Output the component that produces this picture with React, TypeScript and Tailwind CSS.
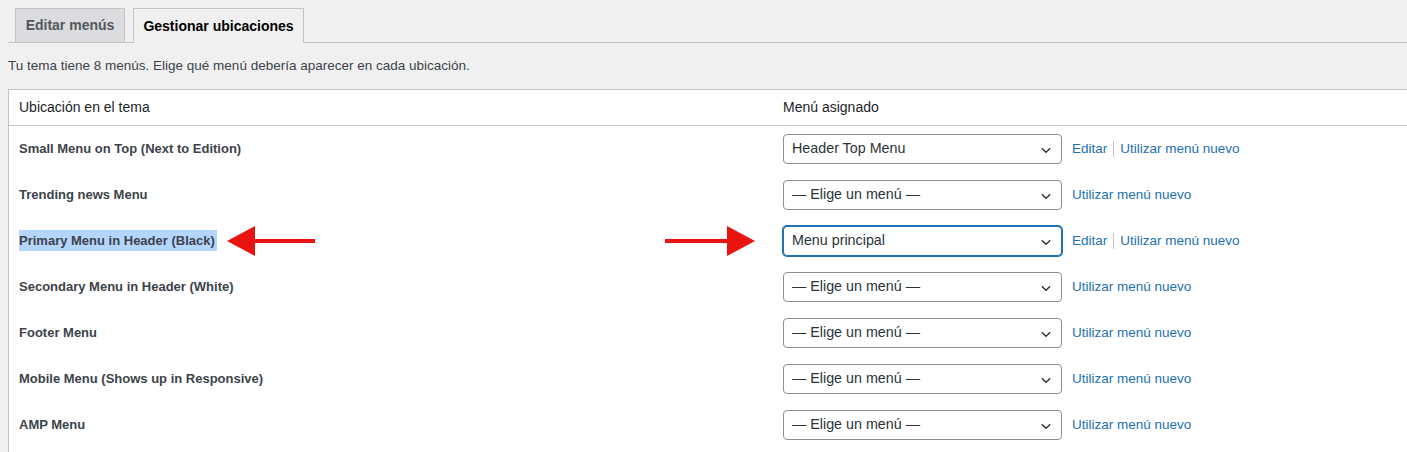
import React from "react";

const rows = [
  { label: "Small Menu on Top (Next to Edition)", value: "Header Top Menu", edit: true },
  { label: "Trending news Menu", value: "— Elige un menú —", edit: false },
  { label: "Primary Menu in Header (Black)", value: "Menu principal", edit: true, focus: true, highlight: true },
  { label: "Secondary Menu in Header (White)", value: "— Elige un menú —", edit: false },
  { label: "Footer Menu", value: "— Elige un menú —", edit: false },
  { label: "Mobile Menu (Shows up in Responsive)", value: "— Elige un menú —", edit: false },
  { label: "AMP Menu", value: "— Elige un menú —", edit: false },
];

function Chevron() {
  return (
    <svg width="16" height="16" viewBox="0 0 16 16" className="absolute right-[7px] top-[7px]">
      <path d="M3.8 6.2 L8 10.2 L12.2 6.2" fill="none" stroke="#2c3338" strokeWidth="1.4" />
    </svg>
  );
}

function Arrow({ dir }: { dir: "left" | "right" }) {
  return (
    <svg width="90" height="34" viewBox="0 0 90 34" className="block">
      {dir === "left" ? (
        <>
          <rect x="24" y="15" width="64" height="4" fill="#e8140f" />
          <polygon points="0,17 28,2 28,32" fill="#e8140f" />
        </>
      ) : (
        <>
          <rect x="0" y="15" width="64" height="4" fill="#e8140f" />
          <polygon points="90,17 62,2 62,32" fill="#e8140f" />
        </>
      )}
    </svg>
  );
}

export default function App() {
  return (
    <div
      className="w-[1407px] h-[452px] overflow-hidden bg-[#f0f0f1] text-[#3c434a]"
      style={{ fontFamily: "'Liberation Sans', Arial, sans-serif" }}
    >
      <div className="pl-[8px] pt-[8px]">
        <div className="flex gap-[8px] pl-[7px] border-b border-[#c3c4c7] h-[34px] box-content">
          <div className="h-[34px] w-[110px] justify-center flex items-center border border-b-0 border-[#c3c4c7] bg-[#dcdcde] text-[14px] font-semibold text-[#50575e]">
            Editar menús
          </div>
          <div className="h-[35px] w-[171px] justify-center flex items-center border border-b-0 border-[#c3c4c7] bg-[#f0f0f1] text-[14px] font-semibold text-black -mb-px">
            Gestionar ubicaciones
          </div>
        </div>
        <p className="text-[13.5px] text-[#3c434a] h-[46px] flex items-center">
          Tu tema tiene 8 menús. Elige qué menú debería aparecer en cada ubicación.
        </p>
        <div className="w-[1430px] bg-white border border-[#c3c4c7] pb-[40px]">
          <div className="flex h-[36px] items-center border-b border-[#c3c4c7] text-[14px] text-[#1d2327]">
            <div className="w-[764px] pl-[10px]">Ubicación en el tema</div>
            <div className="pl-[10px]">Menú asignado</div>
          </div>
          {rows.map((r, i) => (
            <div key={i} className="flex h-[46px] items-center relative">
              <div className="w-[764px] pl-[10px] text-[13px] font-semibold text-[#3c434a]">
                <span className={r.highlight ? "bg-[#b4d5fe] py-[3px] pr-[2px]" : ""}>{r.label}</span>
              </div>
              <div className="pl-[10px] flex items-center">
                <div
                  className={
                    "relative w-[279px] h-[30px] rounded-[4px] bg-white flex items-center pl-[8px] text-[14.3px] text-[#2c3338] " +
                    (r.focus
                      ? "border border-[#2271b1] shadow-[0_0_0_1px_#2271b1]"
                      : "border border-[#8c8f94]")
                  }
                >
                  {r.value}
                  <Chevron />
                </div>
                <div className="ml-[10px] flex items-center text-[13.5px] text-[#2271b1]">
                  {r.edit && (
                    <>
                      <span>Editar</span>
                      <span className="mx-[6px] w-px h-[16px] bg-[#c3c4c7]" />
                    </>
                  )}
                  <span>Utilizar menú nuevo</span>
                </div>
              </div>
              {r.highlight && (
                <>
                  <div className="absolute left-[218px] top-[6px]">
                    <Arrow dir="left" />
                  </div>
                  <div className="absolute left-[656px] top-[6px]">
                    <Arrow dir="right" />
                  </div>
                </>
              )}
            </div>
          ))}
        </div>
      </div>
    </div>
  );
}
